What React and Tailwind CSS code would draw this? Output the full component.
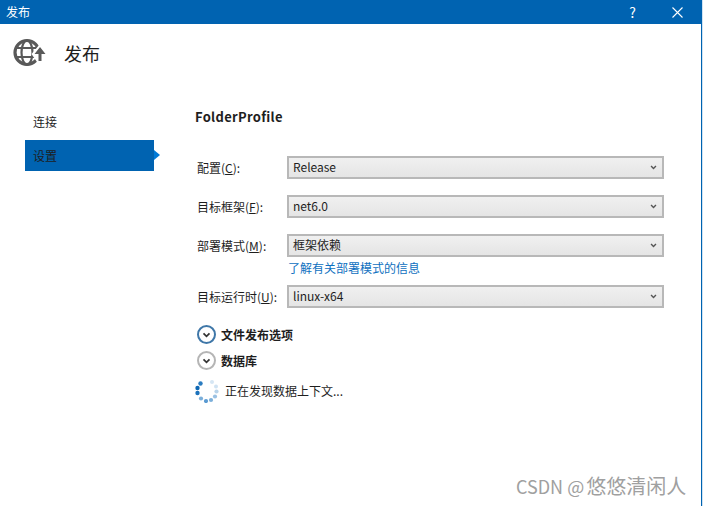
const font = { fontFamily: '"Noto Sans CJK SC", "Noto Sans", sans-serif' };

function Chevron({ className }) {
  return (
    <svg viewBox="0 0 10 7" className={className} fill="none" stroke="currentColor" strokeWidth="2">
      <path d="M1.5 1.5 L5 5 L8.5 1.5" />
    </svg>
  );
}

function GlobeIcon() {
  return (
    <svg viewBox="0 0 34 30" className="w-[34px] h-[30px]" fill="none" stroke="#595959">
      <circle cx="15" cy="14.5" r="12" strokeWidth="3.2" />
      <ellipse cx="15" cy="14.5" rx="5.5" ry="12" strokeWidth="2.2" />
      <path d="M3 10 H27 M3 19 H27" strokeWidth="2.2" />
      <path d="M28 6 L19.5 16 L25 24 H31 L36 16 Z" fill="#fff" stroke="none" />
      <path d="M28 9 L22.5 16 H26.5 V23 H29.5 V16 H33.5 Z" fill="#595959" stroke="none" />
    </svg>
  );
}

function Spinner() {
  const dots = [
    [17, 3, '#d5e6f4', 2], [21, 7.5, '#cfe2f2', 2], [21.5, 12.5, '#b7d3ea', 2.1], [20, 17.5, '#9ac1e3', 2.1],
    [16, 21, '#7bafda', 2.1], [11, 22, '#5a9ad2', 2.1], [6, 19.5, '#7bafda', 2.1],
    [2.5, 14, '#1c72bb', 2.2], [2.5, 9, '#0f68b4', 2.2], [5.5, 4.5, '#2a7cc0', 2.2],
  ];
  return (
    <svg viewBox="0 0 24 24" className="w-[24px] h-[24px]">
      {dots.map(([cx, cy, fill, r], i) => <circle key={i} cx={cx} cy={cy} r={r} fill={fill} />)}
    </svg>
  );
}

function Field({ label, mnemonic, value, className = '' }) {
  return (
    <div className={`flex items-center ${className}`}>
      <div className="w-[92px] shrink-0 pl-[2px] text-[12px] text-[#1e1e1e] whitespace-nowrap">
        {label}(<span className="underline">{mnemonic}</span>):
      </div>
      <div className="w-[377px] h-[23px] border-2 border-[#b8b8b8] bg-gradient-to-b from-[#f0f0f0] to-[#e5e5e5] flex items-center justify-between pl-[4px] pr-[5px]">
        <span className="text-[12px] leading-[16px] -mt-[1px] text-[#1e1e1e]">{value}</span>
        <Chevron className="w-[7px] h-[5px] text-[#555]" />
      </div>
    </div>
  );
}

function Expander({ label, ringColor }) {
  return (
    <div className="flex items-center gap-[5px]">
      <div className={`w-[19px] h-[19px] rounded-full border-2 ${ringColor} flex items-center justify-center`}>
        <Chevron className="w-[9px] h-[6px] text-[#333]" />
      </div>
      <span className="text-[12px] font-bold text-[#1e1e1e]">{label}</span>
    </div>
  );
}

export default function App() {
  return (
    <div style={font} className="w-[703px] h-[506px] bg-white border-r border-[#cfe2f2] flex flex-col overflow-hidden relative">
      {/* title bar */}
      <div className="h-[24px] shrink-0 bg-[#0063b1] flex items-center justify-between text-white">
        <span className="pl-[6px] text-[12px]">发布</span>
        <div className="flex items-center">
          <span className="text-[14px] mr-[36px]">?</span>
          <svg viewBox="0 0 11 11" className="w-[11px] h-[11px] mr-[19px]" stroke="#fff" strokeWidth="1.1">
            <path d="M0.5 0.5 L10.5 10.5 M10.5 0.5 L0.5 10.5" />
          </svg>
        </div>
      </div>

      <div className="flex-1 flex border-r border-[#0063b1]">
        <div className="w-[195px] shrink-0">
          <div className="flex items-center pl-[12px] h-[60px] gap-[18px] -mt-[1px]">
            <GlobeIcon />
            <span className="text-[18px] text-[#1e1e1e]">发布</span>
          </div>
          <div className="pl-[25px] mt-[18px]">
            <div className="h-[39px] flex items-center pl-[8px] pt-[3px] text-[12px] text-[#1e1e1e]">连接</div>
            <div className="relative w-[129px] h-[31px] bg-[#0063b1] flex items-center pl-[8px] text-[12px] text-[#1e1e1e]">
              设置
              <span className="absolute left-full top-[10px] border-y-[5px] border-y-transparent border-l-[6px] border-l-[#0079d6]" />
            </div>
          </div>
        </div>

        <div className="flex-1 flex flex-col">
          <div className="mt-[83px] text-[13px] tracking-[0.3px] font-bold text-[#1e1e1e] leading-[20px]">FolderProfile</div>
          <Field className="mt-[29px]" label="配置" mnemonic="C" value="Release" />
          <Field className="mt-[16px]" label="目标框架" mnemonic="F" value="net6.0" />
          <Field className="mt-[16px]" label="部署模式" mnemonic="M" value="框架依赖" />
          <a className="ml-[93px] mt-[2px] text-[12px] leading-[18px] text-[#0e70c0]">了解有关部署模式的信息</a>
          <Field className="mt-[8px]" label="目标运行时" mnemonic="U" value="linux-x64" />
          <div className="mt-[17px] ml-[2px] flex flex-col gap-[7px]">
            <Expander label="文件发布选项" ringColor="border-[#3f77a8]" />
            <Expander label="数据库" ringColor="border-[#b5b5b5]" />
          </div>
          <div className="mt-[9px] flex items-center gap-[6px]">
            <Spinner />
            <span className="text-[12px] text-[#1e1e1e]">正在发现数据上下文...</span>
          </div>
        </div>
      </div>

      <span className="absolute left-[516px] top-[471px] text-[#a0a0a0] whitespace-nowrap flex items-baseline">
        <span className="text-[18px] mr-[2px]">CSDN @</span>
        <span className="text-[20px]">悠悠清闲人</span>
      </span>
    </div>
  );
}
